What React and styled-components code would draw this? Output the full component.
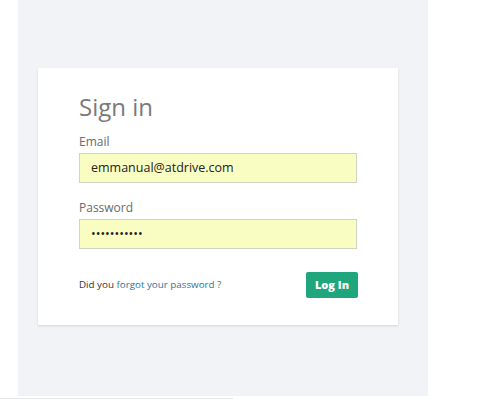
import React from 'react';
import styled, { createGlobalStyle } from 'styled-components';

const GlobalStyle = createGlobalStyle`
  body {
    margin: 0;
    background: #fff;
    font-family: "Open Sans", "Liberation Sans", sans-serif;
  }
`;

const Panel = styled.div`
  margin-left: 18px;
  width: 410px;
  height: 396px;
  background: #f2f3f6;
  padding-top: 68px;
  box-sizing: border-box;
`;

const Card = styled.form`
  margin-left: 20px;
  width: 360px;
  height: 257px;
  box-sizing: border-box;
  padding: 23px 41px 0;
  background: #fff;
  box-shadow: 0 1px 2px rgba(0, 0, 0, 0.12);
  display: flex;
  flex-direction: column;
`;

const Title = styled.h1`
  margin: 0 0 10px;
  font-size: 24px;
  font-weight: 400;
  color: #7a7a7a;
  line-height: 1.36;
`;

const Label = styled.label`
  font-size: 12px;
  color: #6a6a6a;
  line-height: 16px;
  margin-bottom: 3px;
`;

const Input = styled.input`
  height: 30px;
  box-sizing: border-box;
  border: 1px solid #d2d3c0;
  background: #fafdc2;
  padding: 0 11px;
  font-family: inherit;
  font-size: 12.5px;
  color: #222;
  margin-bottom: ${p => p.$gap || 0}px;
  outline: none;
`;

const Row = styled.div`
  margin-top: 23px;
  display: flex;
  align-items: center;
  justify-content: space-between;
`;

const Hint = styled.span`
  font-size: 9.8px;
  color: #333;
`;

const Link = styled.a`
  color: #2f7496;
  text-decoration: none;
`;

const Button = styled.button`
  width: 52px;
  height: 26px;
  margin-right: -1px;
  border: none;
  border-radius: 2px;
  background: #1fa67c;
  color: #fff;
  font-family: inherit;
  font-size: 11px;
  font-weight: 800;
  padding: 0;
`;

const Strip = styled.div`
  width: 233px;
  height: 1px;
  margin-top: 2px;
  background: #e6e7e9;
`;

export default function App() {
  return (
    <>
      <GlobalStyle />
      <Panel>
        <Card onSubmit={e => e.preventDefault()}>
          <Title>Sign in</Title>
          <Label>Email</Label>
          <Input $gap={17} type="text" defaultValue="emmanual@atdrive.com" />
          <Label>Password</Label>
          <Input type="password" defaultValue="secretpass1" />
          <Row>
            <Hint>Did you <Link href="#">forgot your password ?</Link></Hint>
            <Button type="submit">Log In</Button>
          </Row>
        </Card>
      </Panel>
      <Strip />
    </>
  );
}
